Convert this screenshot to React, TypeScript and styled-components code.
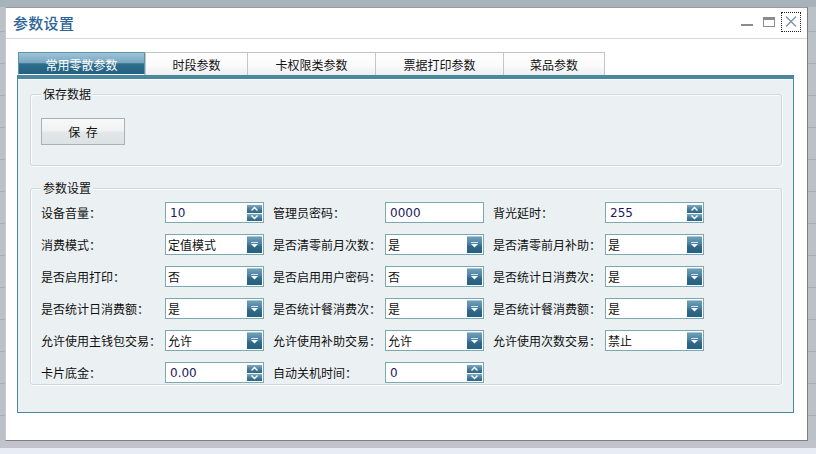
import React from "react";
import styled, { createGlobalStyle } from "styled-components";

const Global = createGlobalStyle`
  html, body { margin: 0; padding: 0; }
  body {
    width: 816px; height: 454px; overflow: hidden;
    font-family: "Noto Sans CJK SC", "DejaVu Sans", sans-serif;
    font-size: 12px; color: #111;
  }
`;

const Page = styled.div`
  width: 816px;
  height: 454px;
  display: flex;
  flex-direction: column;
  background:
    linear-gradient(#a7b3bb, #a7b3bb) top / 100% 7px no-repeat,
    linear-gradient(#c0c3cb, #c0c3cb) 0 440px / 100% 8px no-repeat,
    linear-gradient(#e8ecf4, #e8ecf4) 0 448px / 100% 6px no-repeat,
    repeating-linear-gradient(#bcc0c8 0 31px, #a8acb4 31px 32px);
`;

const Dialog = styled.div`
  margin: 7px 0 0 5px;
  width: 803px;
  height: 434px;
  box-sizing: border-box;
  background: #fff;
  border: 1px solid #7d7d7d;
  border-left-color: #c9c9c9;
  border-top-color: #9a9a9a;
  display: flex;
  flex-direction: column;
`;

const TitleBar = styled.div`
  height: 30px;
  border-bottom: 1px solid #d9d9d9;
  display: flex;
  align-items: center;
  padding: 0 6px 0 7px;
`;

const Title = styled.div`
  flex: 1;
  font-size: 15px;
  color: #2d6497;
  font-weight: 500;
  letter-spacing: 0.3px;
  margin-top: -2px;
`;

const Controls = styled.div`
  display: flex;
  align-items: center;
`;

const MinBtn = styled.div`
  width: 12px;
  height: 2px;
  background: #8c8c8c;
  margin-top: 4px;
  margin-right: 10px;
`;

const MaxBtn = styled.div`
  width: 12px;
  height: 10px;
  box-sizing: border-box;
  border: 1px solid #8c8c8c;
  border-top-width: 3px;
  margin-top: -3px;
  margin-right: 6px;
`;

const CloseBtn = styled.div`
  width: 20px;
  height: 20px;
  box-sizing: border-box;
  border: 1px dotted #222;
  display: flex;
  align-items: center;
  justify-content: center;
  margin-top: -3px;
`;

const Body = styled.div`
  padding: 13px 14px 0 11px;
  display: flex;
  flex-direction: column;
`;

const Tabs = styled.div`
  display: flex;
  height: 23px;
  margin-left: 1px;
`;

const Tab = styled.div<{ $w: number; $active?: boolean }>`
  width: ${(p) => p.$w}px;
  height: 23px;
  box-sizing: border-box;
  display: flex;
  align-items: center;
  justify-content: center;
  font-size: 12px;
  padding-top: 1px;
  color: ${(p) => (p.$active ? "#fff" : "#111")};
  border: 1px solid ${(p) => (p.$active ? "#5e93ad" : "#c3c6c9")};
  border-bottom: ${(p) => (p.$active ? "1px solid #fff" : "none")};
  margin-right: ${(p) => (p.$active ? 0 : -1)}px;
  background: ${(p) =>
    p.$active
      ? "linear-gradient(#9fc3d6 0%, #7aa9c2 45%, #2f6d8d 52%, #23607f 100%)"
      : "linear-gradient(#ffffff 0%, #fbfbfc 55%, #eceef0 100%)"};
`;

const Panel = styled.div`
  width: 777px;
  height: 338px;
  box-sizing: border-box;
  border: 1px solid #4b88a0;
  border-top: 4px solid #4b88a0;
  background: #ebf0f3;
  padding: 15px 11px 0 12px;
  display: flex;
  flex-direction: column;
  gap: 22px;
  box-shadow: inset 0 1px 0 #f7fafb;
`;

const Group = styled.div<{ $h: number }>`
  position: relative;
  height: ${(p) => p.$h}px;
  box-sizing: border-box;
  border: 1px solid #cfd8dd;
  border-radius: 3px;
  box-shadow: inset 1px 1px 0 #fbfcfd, 1px 1px 0 #fbfcfd;
  padding: 13px 10px 0 10px;
`;

const Legend = styled.span`
  position: absolute;
  top: -9px;
  left: 10px;
  padding: 0 2px;
  background: #ebf0f3;
  font-size: 12px;
  line-height: 16px;
  color: #111;
`;

const SaveButton = styled.button`
  margin-top: 10px;
  width: 84px;
  height: 27px;
  box-sizing: border-box;
  border: 1px solid #a9b1b5;
  background: linear-gradient(#f7f8f8 0%, #f1f3f3 45%, #e2e6e8 55%, #dde2e4 100%);
  font-family: "Noto Sans CJK SC", sans-serif;
  font-size: 12px;
  color: #111;
  padding: 0;
  letter-spacing: 0;
  word-spacing: 0;
`;

const Rows = styled.div`
  display: flex;
  flex-direction: column;
  gap: 11px;
`;

const Row = styled.div`
  display: flex;
  gap: 9px;
  height: 21px;
`;

const Field = styled.div`
  display: flex;
  align-items: center;
`;

const Label = styled.div<{ $w: number }>`
  width: ${(p) => p.$w}px;
  font-size: 12px;
  color: #111;
  white-space: nowrap;
`;

const Box = styled.div`
  width: 99px;
  height: 21px;
  box-sizing: border-box;
  border: 1px solid #7ea8b1;
  background: #fff;
  padding: 1px;
  display: flex;
`;

const Value = styled.div<{ $num?: boolean }>`
  flex: 1;
  padding-left: ${(p) => (p.$num ? 3 : 1)}px;
  line-height: 18px;
  font-size: 12px;
  font-family: ${(p) =>
    p.$num ? '"DejaVu Sans", sans-serif' : '"Noto Sans CJK SC", sans-serif'};
  color: ${(p) => (p.$num ? "#1c1a5c" : "#111")};
`;

const ArrowBtn = styled.div`
  width: 15px;
  height: 17px;
  background: linear-gradient(#6f9fba 0%, #4c84a4 40%, #2f6888 60%, #24607f 100%);
  display: flex;
  align-items: center;
  justify-content: center;
  border-top: 1px solid #a9c7d7;
  box-sizing: border-box;
`;

const Spin = styled.div`
  width: 15px;
  display: flex;
  flex-direction: column;
  gap: 1px;
  padding-top: 1px;
`;

const SpinBtn = styled.div`
  height: 8px;
  background: linear-gradient(#7eaac2 0%, #3f7898 60%, #2b6585 100%);
  display: flex;
  align-items: center;
  justify-content: center;
`;

type F =
  | { label: string; w: number; kind: "select"; value: string }
  | { label: string; w: number; kind: "spin"; value: string }
  | { label: string; w: number; kind: "text"; value: string };

const rows: F[][] = [
  [
    { label: "设备音量：", w: 124, kind: "spin", value: "10" },
    { label: "管理员密码：", w: 112, kind: "text", value: "0000" },
    { label: "背光延时：", w: 112, kind: "spin", value: "255" },
  ],
  [
    { label: "消费模式：", w: 124, kind: "select", value: "定值模式" },
    { label: "是否清零前月次数：", w: 112, kind: "select", value: "是" },
    { label: "是否清零前月补助：", w: 112, kind: "select", value: "是" },
  ],
  [
    { label: "是否启用打印：", w: 124, kind: "select", value: "否" },
    { label: "是否启用用户密码：", w: 112, kind: "select", value: "否" },
    { label: "是否统计日消费次：", w: 112, kind: "select", value: "是" },
  ],
  [
    { label: "是否统计日消费额：", w: 124, kind: "select", value: "是" },
    { label: "是否统计餐消费次：", w: 112, kind: "select", value: "是" },
    { label: "是否统计餐消费额：", w: 112, kind: "select", value: "是" },
  ],
  [
    { label: "允许使用主钱包交易：", w: 124, kind: "select", value: "允许" },
    { label: "允许使用补助交易：", w: 112, kind: "select", value: "允许" },
    { label: "允许使用次数交易：", w: 112, kind: "select", value: "禁止" },
  ],
  [
    { label: "卡片底金：", w: 124, kind: "spin", value: "0.00" },
    { label: "自动关机时间：", w: 112, kind: "spin", value: "0" },
  ],
];

const DownTri = () => (
  <svg width="9" height="6" viewBox="0 0 9 6">
    <rect x="1" y="0" width="7" height="1" fill="#d7e6ee" />
    <path d="M1 2 H8 L4.5 5.5 Z" fill="#fff" />
  </svg>
);

const Chevron = ({ up }: { up?: boolean }) => (
  <svg width="9" height="6" viewBox="0 0 9 6">
    <path
      d={up ? "M1.5 4.5 L4.5 1.5 L7.5 4.5" : "M1.5 1.5 L4.5 4.5 L7.5 1.5"}
      stroke="#fff"
      strokeWidth="1.4"
      fill="none"
    />
  </svg>
);

const Control = ({ f }: { f: F }) => {
  const num = f.kind !== "select";
  return (
    <Box>
      <Value $num={num}>{f.value}</Value>
      {f.kind === "select" && (
        <ArrowBtn>
          <DownTri />
        </ArrowBtn>
      )}
      {f.kind === "spin" && (
        <Spin>
          <SpinBtn>
            <Chevron up />
          </SpinBtn>
          <SpinBtn>
            <Chevron />
          </SpinBtn>
        </Spin>
      )}
    </Box>
  );
};

const tabs = [
  { t: "常用零散参数", w: 127, active: true },
  { t: "时段参数", w: 103 },
  { t: "卡权限类参数", w: 129 },
  { t: "票据打印参数", w: 129 },
  { t: "菜品参数", w: 102 },
];

export default function App() {
  return (
    <>
      <Global />
      <Page>
        <Dialog>
          <TitleBar>
            <Title>参数设置</Title>
            <Controls>
              <MinBtn />
              <MaxBtn />
              <CloseBtn>
                <svg width="12" height="11" viewBox="0 0 12 11">
                  <path
                    d="M1 0.5 L11 10.5 M11 0.5 L1 10.5"
                    stroke="#7f93ab"
                    strokeWidth="1.4"
                  />
                </svg>
              </CloseBtn>
            </Controls>
          </TitleBar>
          <Body>
            <Tabs>
              {tabs.map((t) => (
                <Tab key={t.t} $w={t.w} $active={t.active}>
                  {t.t}
                </Tab>
              ))}
            </Tabs>
            <Panel>
              <Group $h={72}>
                <Legend>保存数据</Legend>
                <SaveButton>保&nbsp;&nbsp;存</SaveButton>
              </Group>
              <Group $h={197}>
                <Legend>参数设置</Legend>
                <Rows>
                  {rows.map((r, i) => (
                    <Row key={i}>
                      {r.map((f) => (
                        <Field key={f.label}>
                          <Label $w={f.w}>{f.label}</Label>
                          <Control f={f} />
                        </Field>
                      ))}
                    </Row>
                  ))}
                </Rows>
              </Group>
            </Panel>
          </Body>
        </Dialog>
      </Page>
    </>
  );
}
